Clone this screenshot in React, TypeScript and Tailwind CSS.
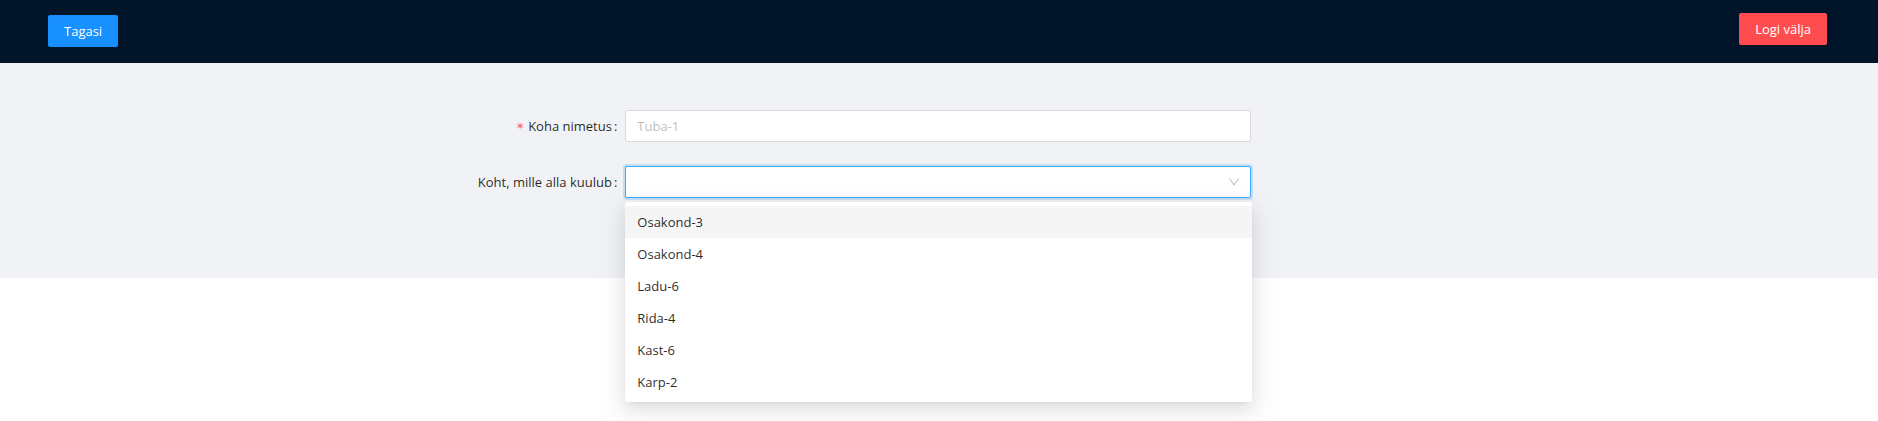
import { useState } from "react";

const places = ["Osakond-3", "Osakond-4", "Ladu-6", "Rida-4", "Kast-6", "Karp-2"];

function Label({ htmlFor, text, required }: { htmlFor: string; text: string; required?: boolean }) {
  return (
    <label htmlFor={htmlFor} className="flex h-8 items-center justify-end text-black/85">
      {required && (
        <span aria-hidden="true" className="mr-1 pt-1 font-['DejaVu_Sans_Mono',monospace] text-[13px] text-[#ff4d4f]">
          *
        </span>
      )}
      {text}
      <span className="mr-2 ml-0.5">:</span>
    </label>
  );
}

export default function App() {
  const [open, setOpen] = useState(true);
  const [active, setActive] = useState(0);
  const [place, setPlace] = useState("");

  return (
    <div className="min-h-screen bg-white font-['Segoe_UI','Open_Sans',sans-serif] text-[13px] leading-[22px]">
      <header className="flex h-[63px] items-start justify-between bg-[#001529] pr-[51px] pl-12">
        <button type="button" className="mt-[15px] h-8 rounded-xs bg-[#1890ff] px-4 text-white">
          Tagasi
        </button>
        <button type="button" className="mt-[13px] h-8 rounded-xs bg-[#ff4d4f] px-4 text-white">
          Logi välja
        </button>
      </header>

      <main className="bg-[#f0f2f5] pt-[47px] pr-0.5 pb-20">
        <form className="flex flex-col gap-6" onSubmit={(e) => e.preventDefault()}>
          <div className="grid grid-cols-3">
            <Label htmlFor="name" text="Koha nimetus" required />
            <input
              id="name"
              type="text"
              required
              placeholder="Tuba-1"
              className="h-8 w-full rounded-xs border border-[#d9d9d9] bg-white px-[11px] text-black/85 shadow-none outline-none placeholder:text-[#bfbfbf]"
            />
          </div>

          <div className="grid grid-cols-3">
            <Label htmlFor="parent" text="Koht, mille alla kuulub" />
            <div className="relative">
              <select
                id="parent"
                value={place}
                onMouseDown={(e) => {
                  e.preventDefault();
                  setOpen(!open);
                }}
                onChange={(e) => setPlace(e.target.value)}
                className={
                  open
                    ? "block h-8 w-full appearance-none rounded-xs border border-[#40a9ff] bg-white px-[11px] text-black/85 shadow-[0_0_0_2px_rgba(24,144,255,0.2)] outline-none"
                    : "block h-8 w-full appearance-none rounded-xs border border-[#d9d9d9] bg-white px-[11px] text-black/85 outline-none"
                }
              >
                <option value="" />
                {places.map((p) => (
                  <option key={p}>{p}</option>
                ))}
              </select>
              <svg
                viewBox="64 64 896 896"
                aria-hidden="true"
                className="pointer-events-none absolute top-[10px] right-[11px] size-3 fill-black/25"
              >
                <path d="M884 256h-75c-5.100 0-9.900 2.500-12.900 6.600L512 654.200 227.900 262.600c-3-4.100-7.800-6.600-12.900-6.600h-75c-6.500 0-10.300 7.400-6.500 12.700l352.600 486.100c12.800 17.600 39 17.600 51.700 0l352.600-486.100c3.900-5.300.1-12.700-6.400-12.700z" />
              </svg>
              {open && (
                <ul
                  role="listbox"
                  aria-label="Koht, mille alla kuulub"
                  className="absolute top-9 -right-px left-0 z-10 rounded-xs bg-white py-1 text-black/85 shadow-[0_3px_6px_-4px_rgba(0,0,0,0.12),0_6px_16px_0_rgba(0,0,0,0.08),0_9px_28px_8px_rgba(0,0,0,0.05)]"
                >
                  {places.map((p, i) => (
                    <li
                      key={p}
                      role="option"
                      aria-selected={p === place}
                      onMouseEnter={() => setActive(i)}
                      onClick={() => {
                        setPlace(p);
                        setOpen(false);
                      }}
                      className={
                        i === active
                          ? "cursor-pointer bg-[#f5f5f5] px-3 py-[5px]"
                          : "cursor-pointer px-3 py-[5px]"
                      }
                    >
                      {p}
                    </li>
                  ))}
                </ul>
              )}
            </div>
          </div>
        </form>
      </main>
    </div>
  );
}
